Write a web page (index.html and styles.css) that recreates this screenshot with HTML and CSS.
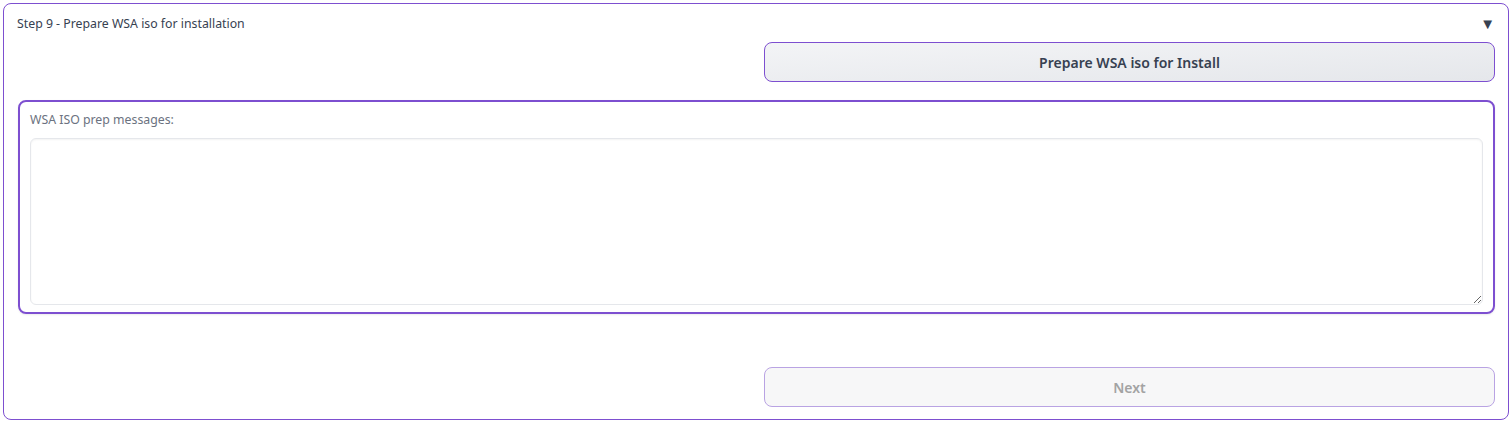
FILE: index.html
```html
<!DOCTYPE html>
<html>
<head>
<meta charset="utf-8">
<link rel="stylesheet" href="styles.css">
</head>
<body>
<div class="accordion">
  <div class="acc-header">
    <span class="acc-title">Step 9 - Prepare WSA iso for installation</span>
    <span class="acc-arrow">▼</span>
  </div>
  <div class="acc-body">
    <div class="row">
      <div class="col"></div>
      <div class="col"><button class="btn btn-primary">Prepare WSA iso for Install</button></div>
    </div>
    <div class="textbox-block">
      <label class="tb-label">WSA ISO prep messages:</label>
      <textarea class="tb-area"></textarea>
    </div>
    <div class="spacer"></div>
    <div class="row">
      <div class="col"></div>
      <div class="col"><button class="btn btn-disabled" disabled>Next</button></div>
    </div>
  </div>
</div>
</body>
</html>
```

FILE: styles.css
```css
* { box-sizing: border-box; }
html, body { margin: 0; padding: 0; background: #fff; }
body { padding: 3px 3px 0 3px; font-family: "Source Sans Pro", "Noto Sans", "Open Sans", sans-serif; }
.accordion {
  width: 1506px;
  height: 417px;
  border: 1px solid #7d4fd0;
  border-radius: 8px;
  display: flex;
  flex-direction: column;
}
.acc-header {
  height: 38px;
  display: flex;
  align-items: center;
  justify-content: space-between;
  padding: 0 13px 0 13px;
  font-size: 12.3px;
  color: #374151;
}
.acc-arrow { font-size: 15px; color: #374151; line-height: 1; }
.acc-body {
  padding: 0 13px 0 14px;
  display: flex;
  flex-direction: column;
}
.row { display: flex; gap: 15px; }
.col { flex: 1; }
.btn {
  width: 100%;
  height: 40px;
  border-radius: 8px;
  font-family: inherit;
  font-size: 14px;
  font-weight: 600;
}
.btn-primary {
  border: 1px solid #7d4fd0;
  background: linear-gradient(to bottom right, #f3f4f6, #e5e7eb);
  color: #374151;
}
.btn-disabled {
  border: 1px solid #b9a3e3;
  background: #f7f7f8;
  color: #a3a3a3;
}
.textbox-block {
  margin-top: 18px;
  height: 214px;
  border: 2px solid #7d4fd0;
  border-radius: 8px;
  padding: 10px 10px 7px 10px;
  display: flex;
  flex-direction: column;
  box-shadow: 0 1px 2px rgba(0,0,0,0.08);
}
.tb-label {
  font-size: 12.3px;
  color: #6b7280;
  height: 26px;
  line-height: 16px;
}
.tb-area {
  flex: 1;
  border: 1px solid #e5e7eb;
  border-radius: 6px;
  box-shadow: inset 0 1px 2px rgba(0,0,0,0.05);
  resize: vertical;
  width: 100%;
}
.spacer { height: 53px; }
```
